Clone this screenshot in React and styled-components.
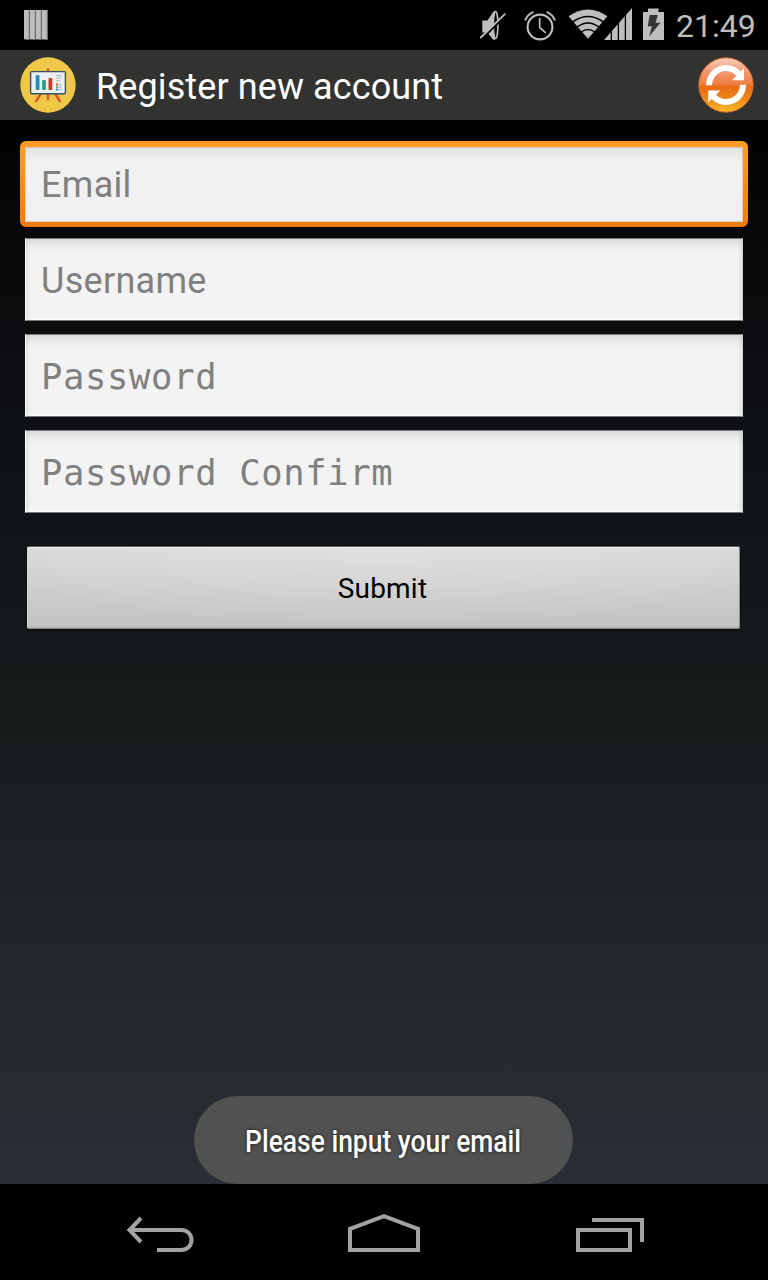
import React from "react";
import styled, { createGlobalStyle, css } from "styled-components";

const GlobalStyle = createGlobalStyle`
  * { box-sizing: border-box; }
  body { margin: 0; background: #000; font-family: Roboto, "Liberation Sans", sans-serif; }
`;

const Screen = styled.div`
  width: 768px;
  height: 1280px;
  display: flex;
  flex-direction: column;
  overflow: hidden;
  background: #000;
`;

const StatusBar = styled.header`
  height: 50px;
  flex: none;
  display: flex;
  align-items: center;
  justify-content: space-between;
  padding: 0 12px 0 24px;
  background: #000;
`;

const StatusIcons = styled.div`
  display: flex;
  align-items: center;
  height: 50px;
`;

const Clock = styled.span`
  font-size: 32px;
  line-height: 50px;
  padding-top: 2px;
  margin-left: 12px;
  width: 80px;
  white-space: nowrap;
  color: #bebebe;
`;

const TitleBar = styled.div`
  height: 70px;
  flex: none;
  display: flex;
  align-items: center;
  padding: 0 14px 0 20px;
  background: #323230;
`;

const Title = styled.h1`
  flex: 1;
  margin: 0 0 0 20px;
  padding-top: 3px;
  font-size: 36px;
  font-weight: 400;
  letter-spacing: 0.1px;
  line-height: 42px;
  color: #fff;
`;

const IconButton = styled.button`
  display: block;
  width: 56px;
  height: 56px;
  padding: 0;
  border: 0;
  background: none;
`;

const Content = styled.main`
  position: relative;
  flex: 1;
  padding: 21px 20px 0;
  background: linear-gradient(180deg, #010202 0%, #08090b 13%, #111417 36%, #171a1b 53%, #202426 74%, #252a2d 87%, #292d36 100%);
`;

const Form = styled.form`
  display: flex;
  flex-direction: column;
`;

const plainField = css`
  height: 83px;
  margin: 0 5px 13px;
  padding: 2px 15px 0;
  border: 1px solid #77797a;
  border-left-color: #fff;
  border-right-color: #ccd0d0;
  background: #f3f3f3;
  box-shadow: inset 0 9px 12px -6px rgba(0, 0, 0, 0.13), inset 3px 0 4px -2px rgba(0, 0, 0, 0.08), inset -3px 0 4px -2px rgba(0, 0, 0, 0.08), inset 0 -1px #fff;
`;

const focusedField = css`
  height: 86px;
  margin: 0 0 11px;
  padding: 0 16px;
  border: 5px solid transparent;
  border-radius: 6px;
  border-top-width: 6px;
  background:
    linear-gradient(180deg, rgba(0, 0, 0, 0.07), transparent 14px) padding-box,
    linear-gradient(#f1f1f1, #f1f1f1) padding-box,
    linear-gradient(180deg, #ff9c27, #f17b0a) border-box;
  box-shadow: inset 0 0 1px 1px rgba(180, 145, 105, 0.35);
`;

const Input = styled.input`
  display: block;
  outline: none;
  ${(p) => (p.$focused ? focusedField : plainField)}
  font-family: ${(p) => (p.$mono ? '"DejaVu Sans Mono", monospace' : 'Roboto, sans-serif')};
  font-size: ${(p) => (p.$mono ? "35.5px" : "36px")};
  letter-spacing: ${(p) => (p.$mono ? "0.65px" : "0.3px")};
  color: #222;
  &::placeholder { color: #808080; opacity: 1; }
`;

const SubmitButton = styled.button`
  height: 83px;
  margin: 20px 8px 0 7px;
  padding: 2px 2px 0 0;
  border: 1px solid #888b8c;
  border-top-color: #5a5d5e;
  border-left-color: #d9d9d9;
  border-radius: 2px;
  box-shadow: inset 0 2px 1px -1px #f4f4f4, inset 0 -2px 2px -1px #adafaf, 0 1px 2px #060708;
  background:
    radial-gradient(ellipse 60% 100% at 50% 0%, rgba(255, 255, 255, 0.2), transparent),
    linear-gradient(180deg, #dadada, #c3c3c3);
  font-family: Roboto, sans-serif;
  font-size: 28px;
  letter-spacing: 0.2px;
  color: #000;
`;

const Toast = styled.div`
  position: absolute;
  left: 194px;
  bottom: 0;
  width: 379px;
  height: 88px;
  display: flex;
  align-items: center;
  justify-content: center;
  border-radius: 44px;
  background: #515151;
`;

const ToastText = styled.span`
  padding-top: 2px;
  font-size: 32px;
  font-weight: 500;
  white-space: nowrap;
  color: #fff;
  text-shadow: 0 0 4px rgba(0, 0, 0, 0.75);
  transform: scaleX(0.826);
`;

const NavBar = styled.nav`
  height: 96px;
  flex: none;
  display: flex;
  align-items: center;
  justify-content: space-between;
  padding: 4px 123px 0 126px;
  background: #000;
`;

const NavIcon = styled.svg`
  display: block;
  height: 40px;
  fill: none;
  stroke: #a2a2a2;
  stroke-width: 4;
`;

const BarsIcon = () => (
  <svg width="24" height="32" viewBox="24 9 24 32">
    {[24, 30, 36, 42].map((x) => (
      <g key={x}>
        <path d={`M${x} 10h5.8v30h-4.6l-1.2-1.5z`} fill="#bdbdbd" />
        <path d={`M${x + 5.3} 10.5v29M${x + 1} 39.5h4.5`} stroke="#626262" fill="none" />
      </g>
    ))}
  </svg>
);

const SystemIcons = () => (
  <svg width="188" height="50" viewBox="476 0 188 50">
    <path d="M482.3 20.5h5.2l5.8-8.8c2-2.6 4.5 1.8 4.5 13.3s-2.5 17-5 14.2l-5.3-6.7h-5.2z" fill="#bebebe" />
    <ellipse cx="495.6" cy="25" rx="2.3" ry="13.5" fill="#000" stroke="#bebebe" strokeWidth="1.6" />
    <path d="M491.6 15Q490.2 25 491.6 35L494 33V17z" fill="#bebebe" />
    <path d="M481.2 39.6L506.2 15" stroke="#000" strokeWidth="2" />
    <path d="M480.3 38L505.3 13.6" stroke="#bebebe" strokeWidth="1.8" />

    <g fill="none" stroke="#bebebe">
      <circle cx="540" cy="27" r="12.4" strokeWidth="2.1" />
      <path d="M539.7 18v9.4l6 5.4" strokeWidth="1.7" />
      <path d="M525.2 20.5C526.3 17 529 13.7 533.5 11.8M555 20.5C553.8 17 551 13.7 546.7 11.8" strokeWidth="2" />
    </g>

    <path d="M588 38.8L568.6 16.2Q588 2.8 607.4 16.2Z" fill="#bebebe" />
    <g fill="none" stroke="#000" strokeWidth="1.5">
      <path d="M572.8 21.8Q588 11 603.2 21.8" />
      <path d="M577 27Q588 18.8 599 27" />
      <path d="M581.2 32Q588 27 594.8 32" />
    </g>

    <path d="M604 40L632 8v32z" fill="#bebebe" />
    <path d="M611.3 27v14M618.4 20v21M625.4 13v28" stroke="#000" strokeWidth="1.3" />

    <path d="M643 12h5V8.5h10.5V12h5.5v28h-21z" fill="#bebebe" />
    <path d="M649.7 15h8.1l-2.3 7.7h5l-11.4 13.8 2.8-10.2h-4.2z" fill="#363636" />
  </svg>
);

const AppIcon = () => (
  <svg width="56" height="56" viewBox="0 0 56 56">
    <circle cx="28" cy="28" r="27.7" fill="#efc84a" />
    <path d="M28 12.5v4M28 37v5M20.5 37l-4.3 7M35.5 37l4.3 7" stroke="#d65c2b" strokeWidth="2.6" strokeLinecap="round" />
    <rect x="10.6" y="14.6" width="34.8" height="22.2" rx="1" fill="#ecf0f1" stroke="#35536b" strokeWidth="1.4" />
    <rect x="15.7" y="18" width="3.8" height="15" rx="1" fill="#298dbb" />
    <rect x="22.1" y="23" width="3.8" height="10" rx="1" fill="#329c85" />
    <rect x="28.5" y="21" width="3.8" height="12" rx="1" fill="#c23c2c" />
    <path d="M36 18.7h5.7M36 21.2h5.7M36 23.6h4" stroke="#bdc3c7" strokeWidth="1.2" />
    <path d="M38.6 27.5h3M38.6 30.2h3M38.6 32.6h3" stroke="#bdc3c7" strokeWidth="1.6" />
    <path d="M36 26.5h2v2h-2z" fill="#d65c2b" />
    <path d="M36 29.2h2v1.6h-2z" fill="#329c85" />
    <path d="M36 31.6h2v2h-2z" fill="#298dbb" />
  </svg>
);

const RefreshIcon = () => (
  <svg width="56" height="56" viewBox="0 0 56 56">
    <defs>
      <linearGradient id="orb" x1="0" y1="0" x2="0" y2="1">
        <stop offset="0" stopColor="#f8d0bd" />
        <stop offset="0.25" stopColor="#f29a73" />
        <stop offset="0.49" stopColor="#ed7d40" />
        <stop offset="0.53" stopColor="#e86c12" />
        <stop offset="0.75" stopColor="#ed8719" />
        <stop offset="1" stopColor="#f8bd2b" />
      </linearGradient>
    </defs>
    <circle cx="28" cy="28" r="27.2" fill="url(#orb)" stroke="#d96a2c" strokeWidth="1" />
    <g fill="none" stroke="#fff" strokeWidth="6">
      <path d="M11 28.3A17 17 0 0 1 40.5 16.6" />
      <path d="M45 27.8A17 17 0 0 1 15.5 39.5" />
    </g>
    <path d="M46 11v12.2H34L40 17zM10.2 45.5V33.4h12.2L16.4 39.5z" fill="#fff" />
  </svg>
);

const fields = [
  { name: "email", placeholder: "Email", focused: true },
  { name: "username", placeholder: "Username" },
  { name: "password", placeholder: "Password", mono: true },
  { name: "confirm", placeholder: "Password Confirm", mono: true },
];

export default function App() {
  return (
    <>
      <GlobalStyle />
      <Screen>
        <StatusBar>
          <BarsIcon />
          <StatusIcons>
            <SystemIcons />
            <Clock>21:49</Clock>
          </StatusIcons>
        </StatusBar>
        <TitleBar>
          <AppIcon />
          <Title>Register new account</Title>
          <IconButton aria-label="Refresh"><RefreshIcon /></IconButton>
        </TitleBar>
        <Content>
          <Form>
            {fields.map((f) => (
              <Input
                key={f.name}
                name={f.name}
                type={f.mono ? "password" : "text"}
                placeholder={f.placeholder}
                $focused={f.focused}
                $mono={f.mono}
              />
            ))}
            <SubmitButton type="button">Submit</SubmitButton>
          </Form>
          <Toast><ToastText>Please input your email</ToastText></Toast>
        </Content>
        <NavBar>
          <NavIcon width="70" viewBox="126 1214 70 40">
            <path d="M128.5 1230H181C195 1230 195 1250 181 1250H157M141 1218L129.5 1230L141 1242" />
          </NavIcon>
          <NavIcon width="75" viewBox="348 1214 75 40">
            <path d="M350 1250V1228.8L384 1216.2L418 1228.8V1250Z" />
          </NavIcon>
          <NavIcon width="70" viewBox="575 1214 70 40">
            <path d="M578 1230H630V1250H578ZM592 1220H642V1242" />
          </NavIcon>
        </NavBar>
      </Screen>
    </>
  );
}
